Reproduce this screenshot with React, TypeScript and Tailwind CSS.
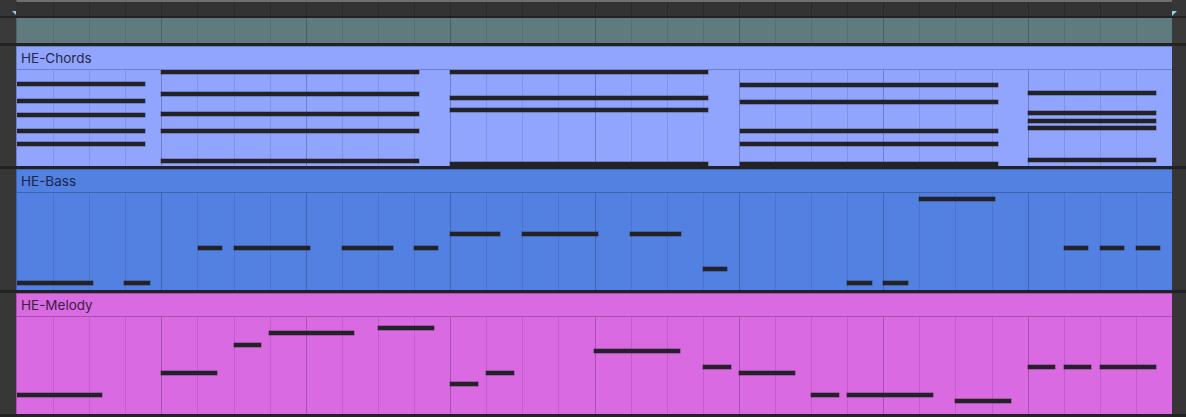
import React from "react";

type N = [number, number, number]; // x1, x2, top (absolute page coords)

const chords: N[] = [
  [17, 145, 82], [17, 145, 99], [17, 145, 113], [17, 145, 129], [17, 145, 142],
  [161, 419, 70], [161, 419, 92], [161, 419, 112], [161, 419, 129], [161, 419, 159],
  [450, 708, 70], [450, 708, 96], [450, 708, 108], [450, 708, 162],
  [740, 998, 83], [740, 998, 100], [740, 998, 129], [740, 998, 142], [740, 998, 162],
  [1028, 1156, 91], [1028, 1156, 111], [1028, 1156, 119], [1028, 1156, 126], [1028, 1156, 158],
];

const bass: N[] = [
  [17, 93, 281], [124, 150, 281], [198, 222, 246], [234, 310, 246], [342, 393, 246],
  [414, 438, 246], [450, 500, 232], [522, 598, 232], [630, 681, 232], [703, 727, 267],
  [847, 872, 281], [883, 908, 281], [919, 995, 197], [1064, 1088, 246], [1100, 1124, 246],
  [1136, 1160, 246],
];

const melody: N[] = [
  [17, 102, 392], [161, 217, 370], [234, 261, 342], [269, 354, 330], [378, 434, 325],
  [450, 478, 381], [486, 514, 370], [594, 680, 348], [703, 731, 364], [739, 795, 370],
  [811, 839, 392], [847, 933, 392], [955, 1011, 398], [1028, 1055, 364], [1064, 1091, 364],
  [1100, 1156, 364],
];

const beats = Array.from({ length: 32 }, (_, i) => i);

function Grid({ line, bar }: { line: string; bar: string }) {
  return (
    <div className="absolute inset-0 grid grid-cols-32">
      {beats.map((i) => (
        <div
          key={i}
          className={
            i === 0
              ? "h-full"
              : i % 4 === 0
              ? "h-full border-l " + bar
              : "h-full border-l " + line
          }
        />
      ))}
    </div>
  );
}

function Track({
  name,
  bg,
  divider,
  line,
  bar,
  text,
  notes,
  areaTop,
  areaH,
}: {
  name: string;
  bg: string;
  divider: string;
  line: string;
  bar: string;
  text: string;
  notes: N[];
  areaTop: number;
  areaH: string;
}) {
  return (
    <div className="flex">
      <div className="w-[16px] bg-[#373737]" />
      <div className={"flex-1 flex flex-col border-l border-t " + divider + " " + bg}>
        <div className={"h-[23px] flex items-center pl-[4px] pt-[2px] border-b " + divider}>
          <span
            className={"text-[13.5px] leading-none " + text}
            style={{ fontFamily: "Inter, 'Noto Sans', sans-serif" }}
          >
            {name}
          </span>
        </div>
        <div className={"relative overflow-hidden " + areaH}>
          <Grid line={line} bar={bar} />
          {notes.map(([x1, x2, top], i) => (
            <div
              key={i}
              className="absolute h-[4px] bg-[#222227] shadow-[0_0_0_0.5px_rgba(20,20,30,0.5)]"
              style={{ left: x1 - 17, width: x2 - x1, top: top - areaTop }}
            />
          ))}
        </div>
      </div>
      <div className="w-[14px] bg-[#363636]" />
    </div>
  );
}

export default function App() {
  return (
    <div className="w-[1186px] h-[417px] bg-[#222222] flex flex-col overflow-hidden">
      {/* ruler */}
      <div className="flex h-[16px]">
        <div className="w-[16px] bg-[#363636] relative">
          <div className="absolute left-[12px] top-[11px] w-0 h-0 border-t-[5px] border-t-[#8fd3ee] border-l-[5px] border-l-transparent" />
        </div>
        <div className="flex-1 relative bg-[#333333] border-t-2 border-[#6e6e6e] border-l border-l-[#333333]">
          <div className="absolute inset-0 grid grid-cols-32">
            {beats.map((i) => (
              <div key={i} className={i === 0 ? "h-full" : "h-full border-l border-[#2a2a2a]"} />
            ))}
          </div>
        </div>
        <div className="w-[14px] bg-[#363636] relative">
          <div className="absolute left-[0px] top-[11px] w-0 h-0 border-t-[5px] border-t-[#8fd3ee] border-r-[5px] border-r-transparent" />
        </div>
      </div>
      {/* teal strip */}
      <div className="flex h-[25px] mt-[2px]">
        <div className="w-[16px] bg-[#3a3a3a]" />
        <div className="flex-1 relative bg-[#607b80] border-l border-[#4f6468]">
          <div className="absolute inset-0 grid grid-cols-32">
            {beats.map((i) => (
              <div
                key={i}
                className={
                  i === 0
                    ? "h-full"
                    : i % 4 === 0
                    ? "h-full border-l border-[#4a5f63]"
                    : "h-full border-l border-[#566f74]"
                }
              />
            ))}
          </div>
        </div>
        <div className="w-[14px] bg-[#3a3a3a]" />
      </div>
      <div className="h-[3px]" />
      <Track
        name="HE-Chords"
        bg="bg-[#92a5fe]"
        divider="border-[#6f7fc6]"
        line="border-[#8093e6]"
        bar="border-[#6e7fcc]"
        text="text-[#262b45]"
        notes={chords}
        areaTop={70}
        areaH="h-[96px]"
      />
      <div className="h-[3px]" />
      <Track
        name="HE-Bass"
        bg="bg-[#5381e2]"
        divider="border-[#3f63b3]"
        line="border-[#4a74cf]"
        bar="border-[#3e64b8]"
        text="text-[#1b2548]"
        notes={bass}
        areaTop={193}
        areaH="h-[97px]"
      />
      <div className="h-[3px]" />
      <Track
        name="HE-Melody"
        bg="bg-[#d96ae2]"
        divider="border-[#a94fb2]"
        line="border-[#c45ccd]"
        bar="border-[#a84fb1]"
        text="text-[#3a1e40]"
        notes={melody}
        areaTop={316}
        areaH="h-[97px]"
      />
    </div>
  );
}
